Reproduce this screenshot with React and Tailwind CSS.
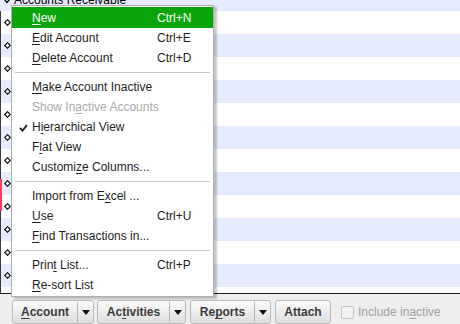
import React from "react";

const FONT = { fontFamily: '"Liberation Sans", Arial, sans-serif' };

function Mn({ text, m }) {
  if (m === undefined || m < 0) return <>{text}</>;
  return (
    <>
      {text.slice(0, m)}
      <span className="underline underline-offset-[2px]">{text[m]}</span>
      {text.slice(m + 1)}
    </>
  );
}

const menu = [
  { t: "New", m: 0, sc: "Ctrl+N", hl: true },
  { t: "Edit Account", m: 0, sc: "Ctrl+E" },
  { t: "Delete Account", m: 0, sc: "Ctrl+D" },
  { sep: true },
  { t: "Make Account Inactive", m: 0 },
  { t: "Show Inactive Accounts", m: 7, dis: true },
  { t: "Hierarchical View", m: 1, check: true },
  { t: "Flat View", m: 1 },
  { t: "Customize Columns...", m: 7 },
  { sep: true },
  { t: "Import from Excel ...", m: 13 },
  { t: "Use", m: 0, sc: "Ctrl+U" },
  { t: "Find Transactions in...", m: 0 },
  { sep: true },
  { t: "Print List...", m: 4, sc: "Ctrl+P" },
  { t: "Re-sort List", m: 0 },
];

function Diamond() {
  return (
    <svg width="7" height="7" viewBox="0 0 7 7" className="block">
      <polygon points="3.5,0.7 6.3,3.5 3.5,6.3 0.7,3.5" fill="#fff" stroke="#000" strokeWidth="1.1" />
    </svg>
  );
}

function Arrow() {
  return (
    <svg width="8" height="5" viewBox="0 0 8 5" className="block">
      <polygon points="0,0 8,0 4,5" fill="#111" />
    </svg>
  );
}

function SplitButton({ label, m, w, split }) {
  return (
    <div
      className="flex h-[24px] items-stretch rounded-[3px] border border-[#b9b9b9] bg-gradient-to-b from-[#fbfbfb] to-[#dedede] text-[12px] font-bold text-[#3b3b3b]"
      style={{ width: w }}
    >
      <div className="flex flex-1 items-center justify-center">
        <Mn text={label} m={m} />
      </div>
      {split && (
        <div className="flex w-[16px] items-center justify-center border-l border-[#b4b4b4] my-[1px]">
          <Arrow />
        </div>
      )}
    </div>
  );
}

export default function App() {
  const rows = [];
  for (let i = 1; i <= 12; i++) {
    rows.push(
      <div
        key={i}
        className={`relative flex h-[23px] shrink-0 items-center ${i % 2 === 0 ? "bg-[#e6ecfe]" : "bg-white"}`}
      >
        <div className="ml-[4px]">
          <Diamond />
        </div>
      </div>
    );
  }

  return (
    <div className="relative h-[324px] w-[460px] overflow-hidden bg-white" style={FONT}>
      {/* list area */}
      <div className="relative flex h-[293px] flex-col overflow-hidden">
        <div className="relative h-[11px] shrink-0 overflow-hidden bg-[#e6ecfe]">
          <div className="mt-[-7px] flex items-center text-[12px] leading-[14px] text-black">
            <svg width="8" height="6" viewBox="0 0 8 6" className="ml-[3px] mr-[3px] mt-[2px]">
              <polyline points="1,1 4,4.5 7,1" fill="none" stroke="#000" strokeWidth="1.2" />
            </svg>
            <span>Accounts Receivable</span>
          </div>
        </div>
        {rows}
        <div className="h-[23px] shrink-0 bg-white" />
        {/* left gutter line */}
        <div className="absolute left-0 top-[11px] h-[282px] w-px bg-[#3a3a3a]" />
        <div className="absolute left-0 top-[179px] h-[32px] w-[2px] bg-[#ff3d5e]" />
      </div>
      <div className="h-px bg-[#1a1a1a]" />

      {/* bottom bar */}
      <div className="flex h-[30px] items-start gap-[4px] bg-[#eeeeee] pl-[12px] pt-[6px]">
        <SplitButton label="Account" m={0} w={82} split />
        <div className="ml-[-1px]">
          <SplitButton label="Activities" m={2} w={89} split />
        </div>
        <SplitButton label="Reports" m={2} w={81} split />
        <SplitButton label="Attach" w={56} />
        <div className="ml-[6px] flex h-[24px] items-center gap-[4px] text-[12px] text-[#a0a0a0]">
          <div className="h-[13px] w-[13px] rounded-[2px] border border-[#c4c4c4] bg-[#f2f2f2]" />
          <span>
            <Mn text="Include inactive" m={10} />
          </span>
        </div>
      </div>

      {/* dropdown menu */}
      <div className="absolute left-[11px] top-[5px] w-[203px] border border-[#adadad] bg-white py-[1px] text-[12px] text-[#1e1e1e] shadow-[3px_2px_2px_rgba(0,0,0,0.22)]">
        {menu.map((it, i) => {
          if (it.sep)
            return (
              <div key={i} className="flex h-[9px] items-center px-[3px]">
                <div className="h-px w-full bg-[#c8c8c8]" />
              </div>
            );
          return (
            <div
              key={i}
              className={`relative flex items-center pl-[20px] ${it.hl ? "h-[21px] bg-[#0aa50a] text-white" : "h-[20px]"} ${it.dis ? "text-[#a9a9a9]" : ""}`}
            >
              {it.check && (
                <svg width="9" height="8" viewBox="0 0 9 8" className="absolute left-[7px] top-[7px]">
                  <polyline points="1,4 3.5,6.6 8,1.2" fill="none" stroke="#222" strokeWidth="1.9" />
                </svg>
              )}
              <span className="flex-1 whitespace-nowrap">
                <Mn text={it.t} m={it.m} />
              </span>
              {it.sc && <span className="w-[56px] whitespace-nowrap">{it.sc}</span>}
            </div>
          );
        })}
      </div>
    </div>
  );
}
